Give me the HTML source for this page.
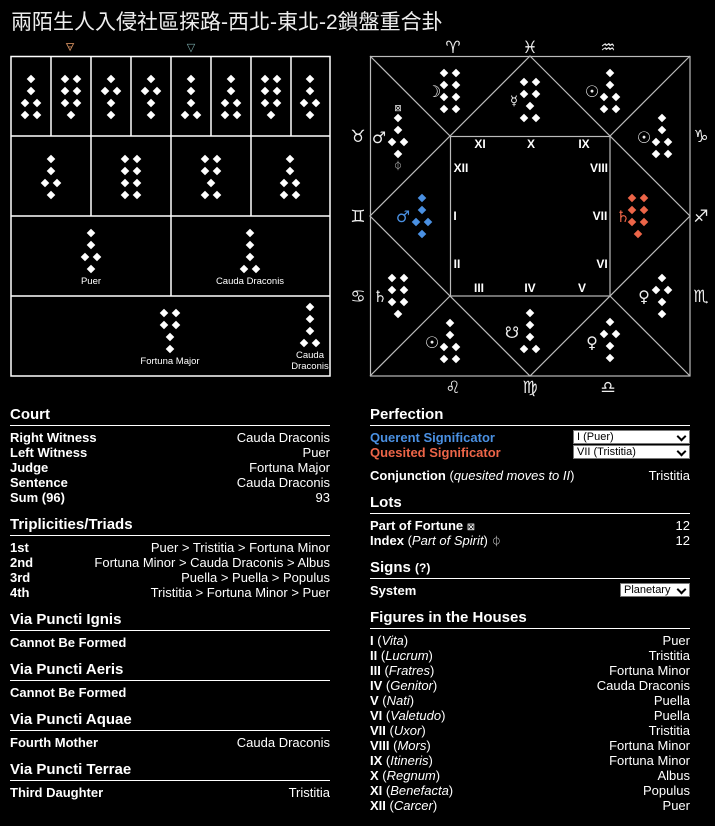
<!DOCTYPE html>
<html><head><meta charset="utf-8"><style>
*{margin:0;padding:0;box-sizing:border-box}
body{width:715px;height:826px;background:#000;color:#fff;font-family:"Liberation Sans",Arial,sans-serif;position:relative;overflow:hidden}
.t{position:absolute;left:11px;top:6px;font-size:21px;font-family:"Liberation Sans","Noto Sans CJK TC",sans-serif;color:#eee;white-space:nowrap}
.sec{position:absolute;width:320px;font-size:13px;line-height:15px}
.h{font-weight:bold;font-size:15px;line-height:18px;height:20px;border-bottom:1px solid #fff;padding-bottom:1px;margin-bottom:4px}
.r{display:flex;justify-content:space-between;white-space:nowrap;height:15px}
.r b{font-weight:bold}
.sm{font-size:10px;line-height:10px}
.gap{height:11px}
.sel{width:117px;height:14px;background:#fff;color:#000;font-size:11px;line-height:12px;border:1px solid #777;padding-left:3px;position:relative}
.sel:after{content:"";position:absolute;right:4px;top:2px;width:5px;height:5px;border-right:2px solid #000;border-bottom:2px solid #000;transform:rotate(45deg)}
</style></head><body>
<div class="t">兩陌生人入侵社區探路-西北-東北-2鎖盤重合卦</div>
<svg width="715" height="400" style="position:absolute;left:0;top:0" font-family="DejaVu Sans, sans-serif">
<defs><path id="d" d="M0,-4.3 L4.3,0 L0,4.3 L-4.3,0Z" fill="#fff"/>
<path id="b" d="M0,-4.3 L4.3,0 L0,4.3 L-4.3,0Z" fill="#4a90e2"/>
<path id="o" d="M0,-4.3 L4.3,0 L0,4.3 L-4.3,0Z" fill="#ec6548"/></defs>
<text x="70" y="51" fill="#c8875a" font-size="11" text-anchor="middle">🜃</text>
<text x="191" y="51" fill="#7aaaaa" font-size="11" text-anchor="middle">▽</text>
<g stroke="#fff" stroke-width="1.5" fill="none">
<rect x="11" y="56.5" width="319" height="319.5"/>
<line x1="11" y1="136" x2="330" y2="136"/><line x1="11" y1="216" x2="330" y2="216"/><line x1="11" y1="296" x2="330" y2="296"/>
<line x1="51" y1="56" x2="51" y2="136"/><line x1="91" y1="56" x2="91" y2="216"/><line x1="131" y1="56" x2="131" y2="136"/><line x1="171" y1="56" x2="171" y2="296"/><line x1="211" y1="56" x2="211" y2="136"/><line x1="251" y1="56" x2="251" y2="216"/><line x1="291" y1="56" x2="291" y2="136"/>
</g>
<use href="#d" x="31" y="79"/><use href="#d" x="31" y="91"/><use href="#d" x="25" y="103"/><use href="#d" x="37" y="103"/><use href="#d" x="25" y="115"/><use href="#d" x="37" y="115"/>
<use href="#d" x="65" y="79"/><use href="#d" x="77" y="79"/><use href="#d" x="65" y="91"/><use href="#d" x="77" y="91"/><use href="#d" x="65" y="103"/><use href="#d" x="77" y="103"/><use href="#d" x="71" y="115"/>
<use href="#d" x="111" y="79"/><use href="#d" x="105" y="91"/><use href="#d" x="117" y="91"/><use href="#d" x="111" y="103"/><use href="#d" x="111" y="115"/>
<use href="#d" x="151" y="79"/><use href="#d" x="145" y="91"/><use href="#d" x="157" y="91"/><use href="#d" x="151" y="103"/><use href="#d" x="151" y="115"/>
<use href="#d" x="191" y="79"/><use href="#d" x="191" y="91"/><use href="#d" x="191" y="103"/><use href="#d" x="185" y="115"/><use href="#d" x="197" y="115"/>
<use href="#d" x="231" y="79"/><use href="#d" x="231" y="91"/><use href="#d" x="225" y="103"/><use href="#d" x="237" y="103"/><use href="#d" x="225" y="115"/><use href="#d" x="237" y="115"/>
<use href="#d" x="265" y="79"/><use href="#d" x="277" y="79"/><use href="#d" x="265" y="91"/><use href="#d" x="277" y="91"/><use href="#d" x="265" y="103"/><use href="#d" x="277" y="103"/><use href="#d" x="271" y="115"/>
<use href="#d" x="310" y="79"/><use href="#d" x="310" y="91"/><use href="#d" x="304" y="103"/><use href="#d" x="316" y="103"/><use href="#d" x="310" y="115"/>
<use href="#d" x="51" y="159"/><use href="#d" x="51" y="171"/><use href="#d" x="45" y="183"/><use href="#d" x="57" y="183"/><use href="#d" x="51" y="195"/>
<use href="#d" x="125" y="159"/><use href="#d" x="137" y="159"/><use href="#d" x="125" y="171"/><use href="#d" x="137" y="171"/><use href="#d" x="125" y="183"/><use href="#d" x="137" y="183"/><use href="#d" x="125" y="195"/><use href="#d" x="137" y="195"/>
<use href="#d" x="205" y="159"/><use href="#d" x="217" y="159"/><use href="#d" x="205" y="171"/><use href="#d" x="217" y="171"/><use href="#d" x="211" y="183"/><use href="#d" x="205" y="195"/><use href="#d" x="217" y="195"/>
<use href="#d" x="290" y="159"/><use href="#d" x="290" y="171"/><use href="#d" x="284" y="183"/><use href="#d" x="296" y="183"/><use href="#d" x="284" y="195"/><use href="#d" x="296" y="195"/>
<use href="#d" x="91" y="233"/><use href="#d" x="91" y="245"/><use href="#d" x="85" y="257"/><use href="#d" x="97" y="257"/><use href="#d" x="91" y="269"/>
<use href="#d" x="250" y="233"/><use href="#d" x="250" y="245"/><use href="#d" x="250" y="257"/><use href="#d" x="244" y="269"/><use href="#d" x="256" y="269"/>
<g font-family="Liberation Sans, Arial, sans-serif" font-size="9.5" fill="#fff" text-anchor="middle">
<text x="91" y="284">Puer</text><text x="250" y="284">Cauda Draconis</text>
<text x="170" y="364">Fortuna Major</text><text x="310" y="358">Cauda</text><text x="310" y="369">Draconis</text></g>
<use href="#d" x="164" y="313"/><use href="#d" x="176" y="313"/><use href="#d" x="164" y="325"/><use href="#d" x="176" y="325"/><use href="#d" x="170" y="337"/><use href="#d" x="170" y="349"/>
<use href="#d" x="310" y="307"/><use href="#d" x="310" y="319"/><use href="#d" x="310" y="331"/><use href="#d" x="304" y="343"/><use href="#d" x="316" y="343"/>

<g stroke="#bbb" stroke-width="1.2" fill="none">
<rect x="370.5" y="56.5" width="319.5" height="319.5"/>
<rect x="450.5" y="136.5" width="159.5" height="159.5"/>
<line x1="370" y1="56" x2="450" y2="136"/><line x1="690" y1="56" x2="610" y2="136"/><line x1="370" y1="376" x2="450" y2="296"/><line x1="690" y1="376" x2="610" y2="296"/>
<path d="M530,56 L690,216 L530,376 L370,216Z"/>
</g>
<g fill="#eee" font-size="17" text-anchor="middle">
<text x="453" y="53">♈</text><text x="530" y="53">♓</text><text x="608" y="53">♒</text>
<text x="358" y="142">♉</text><text x="358" y="222">♊</text><text x="358" y="302">♋</text>
<text x="701" y="142">♑</text><text x="701" y="222">♐</text><text x="701" y="302">♏</text>
<text x="453" y="393">♌</text><text x="530" y="393">♍</text><text x="608" y="393">♎</text>
</g>
<g fill="#eee" font-size="16" text-anchor="middle">
<text x="434" y="97">☽</text><text x="514" y="105" font-size="13">☿</text><text x="592" y="97">☉</text><text x="644" y="143">☉</text>
<text x="379" y="143">♂</text><text x="398" y="111" font-size="9">⊠</text><text x="398" y="169" font-size="9">⏀</text>
<text x="380" y="302">♄</text><text x="432" y="348">☉</text><text x="512" y="338">☋</text><text x="592" y="348">♀</text><text x="644" y="302">♀</text>
<text x="403" y="222" fill="#4a90e2">♂</text><text x="623" y="222" fill="#ec6548">♄</text>
</g>
<g fill="#fff" font-family="Liberation Sans, Arial, sans-serif" font-weight="bold" font-size="12" text-anchor="middle">
<text x="480" y="148">XI</text><text x="531" y="148">X</text><text x="584" y="148">IX</text>
<text x="461" y="172">XII</text><text x="599" y="172">VIII</text>
<text x="455" y="220">I</text><text x="600" y="220">VII</text>
<text x="457" y="268">II</text><text x="602" y="268">VI</text>
<text x="479" y="292">III</text><text x="530" y="292">IV</text><text x="582" y="292">V</text>
</g>
<use href="#d" x="444" y="73"/><use href="#d" x="456" y="73"/><use href="#d" x="444" y="85"/><use href="#d" x="456" y="85"/><use href="#d" x="444" y="97"/><use href="#d" x="456" y="97"/><use href="#d" x="444" y="109"/><use href="#d" x="456" y="109"/>
<use href="#d" x="524" y="82"/><use href="#d" x="536" y="82"/><use href="#d" x="524" y="94"/><use href="#d" x="536" y="94"/><use href="#d" x="530" y="106"/><use href="#d" x="524" y="118"/><use href="#d" x="536" y="118"/>
<use href="#d" x="610" y="73"/><use href="#d" x="610" y="85"/><use href="#d" x="604" y="97"/><use href="#d" x="616" y="97"/><use href="#d" x="604" y="109"/><use href="#d" x="616" y="109"/>
<use href="#d" x="662" y="118"/><use href="#d" x="662" y="130"/><use href="#d" x="656" y="142"/><use href="#d" x="668" y="142"/><use href="#d" x="656" y="154"/><use href="#d" x="668" y="154"/>
<use href="#d" x="398" y="118"/><use href="#d" x="398" y="130"/><use href="#d" x="392" y="142"/><use href="#d" x="404" y="142"/><use href="#d" x="398" y="154"/>
<use href="#b" x="422" y="198"/><use href="#b" x="422" y="210"/><use href="#b" x="416" y="222"/><use href="#b" x="428" y="222"/><use href="#b" x="422" y="234"/>
<use href="#o" x="632" y="198"/><use href="#o" x="644" y="198"/><use href="#o" x="632" y="210"/><use href="#o" x="644" y="210"/><use href="#o" x="632" y="222"/><use href="#o" x="644" y="222"/><use href="#o" x="638" y="234"/>
<use href="#d" x="392" y="278"/><use href="#d" x="404" y="278"/><use href="#d" x="392" y="290"/><use href="#d" x="404" y="290"/><use href="#d" x="392" y="302"/><use href="#d" x="404" y="302"/><use href="#d" x="398" y="314"/>
<use href="#d" x="450" y="323"/><use href="#d" x="450" y="335"/><use href="#d" x="444" y="347"/><use href="#d" x="456" y="347"/><use href="#d" x="444" y="359"/><use href="#d" x="456" y="359"/>
<use href="#d" x="530" y="313"/><use href="#d" x="530" y="325"/><use href="#d" x="530" y="337"/><use href="#d" x="524" y="349"/><use href="#d" x="536" y="349"/>
<use href="#d" x="610" y="322"/><use href="#d" x="604" y="334"/><use href="#d" x="616" y="334"/><use href="#d" x="610" y="346"/><use href="#d" x="610" y="358"/>
<use href="#d" x="662" y="278"/><use href="#d" x="656" y="290"/><use href="#d" x="668" y="290"/><use href="#d" x="662" y="302"/><use href="#d" x="662" y="314"/>
</svg>

<div class="sec" style="left:10px;top:406px">
<div class="h">Court</div>
<div class="r"><b>Right Witness</b><span>Cauda Draconis</span></div>
<div class="r"><b>Left Witness</b><span>Puer</span></div>
<div class="r"><b>Judge</b><span>Fortuna Major</span></div>
<div class="r"><b>Sentence</b><span>Cauda Draconis</span></div>
<div class="r"><b>Sum (96)</b><span>93</span></div>
<div class="gap"></div>
<div class="h">Triplicities/Triads</div>
<div class="r"><b>1st</b><span>Puer &gt; Tristitia &gt; Fortuna Minor</span></div>
<div class="r"><b>2nd</b><span>Fortuna Minor &gt; Cauda Draconis &gt; Albus</span></div>
<div class="r"><b>3rd</b><span>Puella &gt; Puella &gt; Populus</span></div>
<div class="r"><b>4th</b><span>Tristitia &gt; Fortuna Minor &gt; Puer</span></div>
<div class="gap"></div>
<div class="h">Via Puncti Ignis</div>
<div class="r"><b>Cannot Be Formed</b></div>
<div class="gap"></div>
<div class="h">Via Puncti Aeris</div>
<div class="r"><b>Cannot Be Formed</b></div>
<div class="gap"></div>
<div class="h">Via Puncti Aquae</div>
<div class="r"><b>Fourth Mother</b><span>Cauda Draconis</span></div>
<div class="gap"></div>
<div class="h">Via Puncti Terrae</div>
<div class="r"><b>Third Daughter</b><span>Tristitia</span></div>
</div>

<div class="sec" style="left:370px;top:406px">
<div class="h">Perfection</div>
<div class="r"><b style="color:#4a90e2">Querent Significator</b><div class="sel">I (Puer)</div></div>
<div class="r"><b style="color:#ec6548">Quesited Significator</b><div class="sel">VII (Tristitia)</div></div>
<div style="height:8px"></div>
<div class="r"><span><b>Conjunction</b> (<i>quesited moves to II</i>)</span><span>Tristitia</span></div>
<div class="gap"></div>
<div class="h">Lots</div>
<div class="r"><span><b>Part of Fortune</b> <span class="sm">⊠</span></span><span>12</span></div>
<div class="r"><span><b>Index</b> (<i>Part of Spirit</i>) <span class="sm">⏀</span></span><span>12</span></div>
<div class="gap"></div>
<div class="h">Signs <span style="font-size:12px">(?)</span></div>
<div class="r"><b>System</b><div class="sel" style="width:70px">Planetary</div></div>
<div class="gap"></div>
<div class="h">Figures in the Houses</div>
<div class="r"><span><b>I</b> (<i>Vita</i>)</span><span>Puer</span></div>
<div class="r"><span><b>II</b> (<i>Lucrum</i>)</span><span>Tristitia</span></div>
<div class="r"><span><b>III</b> (<i>Fratres</i>)</span><span>Fortuna Minor</span></div>
<div class="r"><span><b>IV</b> (<i>Genitor</i>)</span><span>Cauda Draconis</span></div>
<div class="r"><span><b>V</b> (<i>Nati</i>)</span><span>Puella</span></div>
<div class="r"><span><b>VI</b> (<i>Valetudo</i>)</span><span>Puella</span></div>
<div class="r"><span><b>VII</b> (<i>Uxor</i>)</span><span>Tristitia</span></div>
<div class="r"><span><b>VIII</b> (<i>Mors</i>)</span><span>Fortuna Minor</span></div>
<div class="r"><span><b>IX</b> (<i>Itineris</i>)</span><span>Fortuna Minor</span></div>
<div class="r"><span><b>X</b> (<i>Regnum</i>)</span><span>Albus</span></div>
<div class="r"><span><b>XI</b> (<i>Benefacta</i>)</span><span>Populus</span></div>
<div class="r"><span><b>XII</b> (<i>Carcer</i>)</span><span>Puer</span></div>
</div>
</body></html>
